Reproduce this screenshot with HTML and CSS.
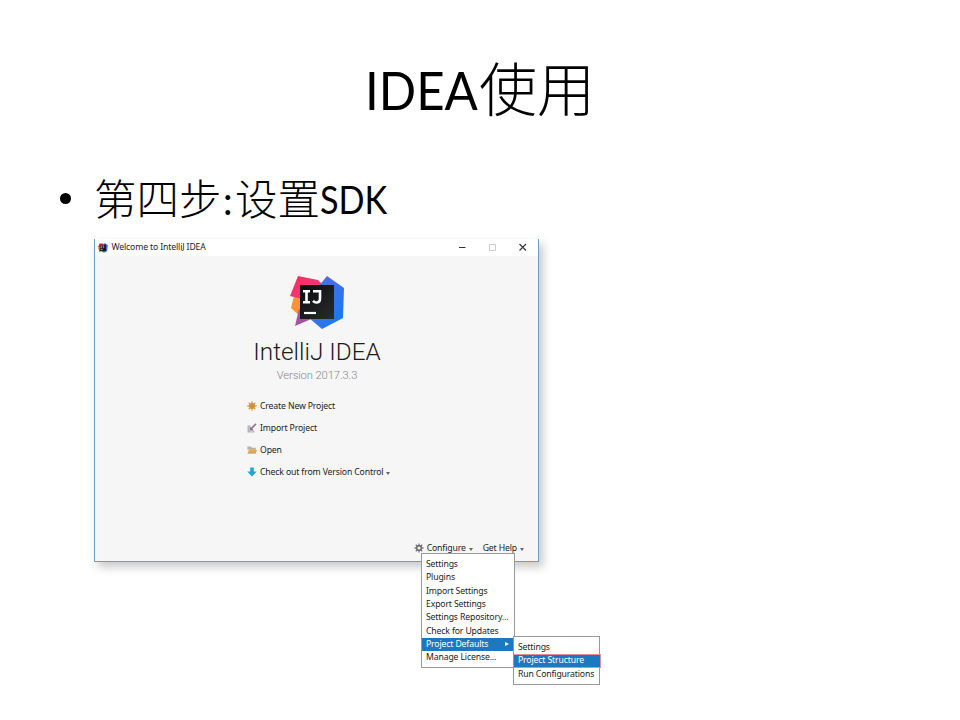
FILE: index.html
```html
<!DOCTYPE html>
<html lang="zh-CN">
<head>
<meta charset="utf-8">
<title>IDEA使用</title>
<link rel="stylesheet" href="styles.css">
</head>
<body>
<main class="slide">
  <h1 class="title"><span class="latin">IDEA</span><span class="han">使用</span></h1>
  <div class="step"><span class="bullet"></span><span class="han">第四步</span><span class="latin colon">:</span><span class="han">设置</span><span class="latin sdk">SDK</span></div>
  <section class="window">
    <header class="titlebar">
      <svg class="app" viewBox="0 0 54 54"><path fill="#f7315f" d="M9 1l22 3-4 30L0 21z"/><path fill="#f58b31" d="M3 20L0 33l14 14 8-22z"/><path fill="#9659ae" d="M11 31L5 50l18-10z"/><path fill="#3b6fe0" d="M36 0l17 11-4 34-17 8-16-8z"/><path fill="#151719" d="M9 9h34v34H9z"/><path stroke="#fff" stroke-width="3" fill="none" d="M14 15h6m-3 0v11m-3 0h6m5-11h6v9q0 3-6 2M14 36h12"/></svg>
      <span class="caption">Welcome to IntelliJ IDEA</span>
      <svg class="controls" viewBox="0 0 70 10"><path d="M1 5.500h6.500" stroke="#333"/><path d="M31.500 2.500h6v6h-6z" fill="none" stroke="#ccc"/><path d="M61.500 2l6.500 6.500m0-6.500l-6.500 6.500" stroke="#333" stroke-width="1.100"/></svg>
    </header>
    <div class="content">
      <svg class="logo" viewBox="0 0 54 54">
        <defs>
          <linearGradient id="pink" x1="0" y1="0" x2="1" y2="1"><stop offset="0" stop-color="#ff2b5e"/><stop offset="1" stop-color="#e6408a"/></linearGradient>
          <linearGradient id="blue" x1="0" y1="0" x2="1" y2="1"><stop offset="0" stop-color="#6b62d4"/><stop offset=".45" stop-color="#3f72e8"/><stop offset="1" stop-color="#087cfa"/></linearGradient>
          <linearGradient id="dark" x1="0" y1="0" x2="1" y2="1"><stop offset="0" stop-color="#0b0c0e"/><stop offset="1" stop-color="#292b2d"/></linearGradient>
        </defs>
        <path fill="#f79433" d="M4 20L1 32l11 10V19z"/>
        <path fill="#a653a0" d="M9 33L5 50l21-9z"/>
        <path fill="url(#pink)" d="M8 0l20 4 7 7-23 12-12-3z"/>
        <path fill="url(#blue)" d="M37 0l17 12-1 30-21 11-13-11 9-31z"/>
        <path fill="url(#dark)" d="M10 9h34v34H10z"/>
        <path d="M13 15.200h7m-3.500 0v11m-3.500 0h7m3-11h7v7.300q0 4-3.500 4-2 0-3.500-1.700" fill="none" stroke="#fff" stroke-width="2.600"/>
        <path d="M14 37h12" stroke="#fff" stroke-width="2.200"/>
      </svg>
      <div class="product">IntelliJ IDEA</div>
      <div class="version">Version 2017.3.3</div>
      <ul class="actions">
        <li><svg viewBox="0 0 10 10"><path d="M5 .3v9.400M.3 5h9.400M1.700 1.700l6.600 6.600m0-6.600L1.700 8.300" stroke="#dda040" stroke-width="1.300"/><circle cx="5" cy="5" r="2.900" fill="#d29330"/></svg><span>Create New Project</span></li>
        <li><svg viewBox="0 0 10 10"><path d="M.5 2.500H4L2.500 4v3l1 1.500 4-.5v1.500h-7z" fill="#b5b5b8"/><path d="M9 .8L4.500 5.300" stroke="#8c789f" stroke-width="1.700"/><path d="M2.800 3.500v4h4.200z" fill="#806b96"/></svg><span>Import Project</span></li>
        <li><svg viewBox="0 0 10 10"><path d="M.4 1.500h3.500l1 1.300h4v2H.4z" fill="#b6b2aa"/><path d="M2 4.700h8L8.800 8.700H.4z" fill="#dfa858"/></svg><span>Open</span></li>
        <li><svg viewBox="0 0 10 10"><path d="M3.200.4h3.600v4h3L5 9.500.2 4.400h3z" fill="#20a5d5"/></svg><span>Check out from Version Control</span><i class="caret"></i></li>
      </ul>
      <footer class="footer">
        <svg viewBox="0 0 10 10"><path d="M5 .5v9M.5 5h9M1.800 1.800l6.400 6.400m0-6.400L1.800 8.200" stroke="#777" stroke-width="1.300"/><circle cx="5" cy="5" r="2.300" fill="#f6f6f6" stroke="#666" stroke-width="1.400"/></svg>
        <span>Configure</span><i class="caret"></i><span class="help">Get Help</span><i class="caret"></i>
      </footer>
    </div>
    <ul class="menu main">
      <li>Settings</li><li>Plugins</li><li>Import Settings</li><li>Export Settings</li><li>Settings Repository...</li><li>Check for Updates</li><li class="on">Project Defaults<i class="arrow"></i></li><li>Manage License...</li>
    </ul>
    <ul class="menu sub">
      <li>Settings</li><li class="on marked">Project Structure</li><li>Run Configurations</li>
    </ul>
  </section>
</main>
</body>
</html>
```
FILE: styles.css
```css
* { box-sizing: border-box; }
body { margin: 0; background: #fff; color: #000; }
ul { list-style: none; margin: 0; padding: 0; }
svg { display: block; flex: none; }
.slide { width: 960px; height: 720px; overflow: hidden; padding-top: 43px; }
.latin { font-family: Lato, sans-serif; }
.han { font-family: "Noto Sans CJK SC", sans-serif; font-weight: 300; }
.title { margin: 0; height: 90px; display: flex; justify-content: center; align-items: baseline; font-weight: 400; font-size: 58px; line-height: 86px; }
.title .latin { width: 114px; font-size: 52px; transform: translateY(-1px) scaleX(.945); transform-origin: left; }
.step { height: 60px; margin: 34px 0 12px 60px; display: flex; align-items: baseline; font-size: 42.500px; line-height: 60px; }
.bullet { width: 11px; height: 11px; border-radius: 50%; background: #000; margin: 3px 23px 0 0; align-self: center; }
.step .latin { font-size: 38px; }
.step .colon { width: 13.500px; padding-left: 1.500px; }
.step .sdk { transform: translateY(-1px) scaleX(.9); transform-origin: left; }
.window { position: relative; width: 445px; height: 323px; margin-left: 94px; border: solid #6d9fc5; border-width: 0 1.500px 1.500px 1px; background: #f6f6f6; box-shadow: 4px 5px 9px rgba(0,0,0,.22); font: 8.700px/13px "Noto Sans", sans-serif; letter-spacing: -.15px; color: #1c1c1c; white-space: nowrap; }
.titlebar { height: 17px; background: #fff; display: flex; align-items: center; padding: 0 10px 0 3px; }
.app { width: 10px; height: 10px; }
.caption { margin-left: 3.500px; }
.controls { width: 70px; height: 10px; margin: -1px 0 0 auto; }
.content { height: 304px; display: flex; flex-direction: column; align-items: center; padding-top: 20px; }
.logo { width: 54px; height: 54px; }
.product { font: 300 24.300px/28px Roboto, sans-serif; letter-spacing: 0; margin: 8px 0 0 1px; }
.version { font: 300 11.200px/14px Roboto, sans-serif; letter-spacing: -.1px; color: #888; margin: 3px 0 0 1px; }
.actions { align-self: flex-start; margin: 12px 0 0 152px; }
.actions li { height: 22px; display: flex; align-items: center; }
.actions svg, .footer svg { width: 10px; height: 10px; margin-right: 3px; }
.caret { border: solid transparent; border-width: 3px 2.500px 0; border-top-color: #666; margin: 3px 0 0 3px; }
.footer { display: flex; align-items: center; align-self: flex-end; margin: auto 14px 5px 0; height: 14px; }
.help { margin-left: 10px; }
.menu { position: absolute; background: #fff; border: 1px solid #999; padding: 3px 0 4px; }
.menu li { height: 13.300px; padding-left: 4px; display: flex; align-items: center; }
.main { left: 326px; top: 314px; width: 94px; height: 115px; padding-top: 4px; }
.sub { left: 418px; top: 397px; width: 87px; height: 49px; padding-top: 4px; }
.menu .on { background: #1c78c0; color: #fff; }
.menu .marked { position: relative; z-index: 1; margin-right: -2px; border: 1px solid #e58b94; border-left-width: 0; background-clip: padding-box; }
.arrow { margin: 0 5px 0 auto; border: solid transparent; border-width: 2.500px 0 2.500px 4px; border-left-color: #fff; }
```
